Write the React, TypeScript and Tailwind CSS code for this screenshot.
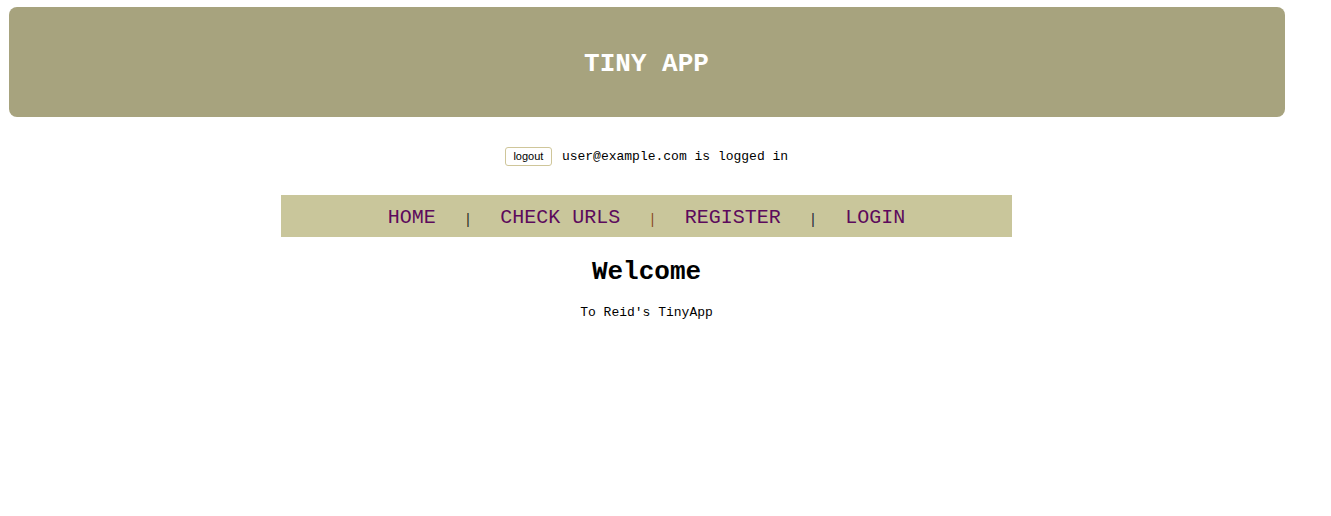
import React from "react";

const mono = { fontFamily: '"Liberation Mono", "Courier New", monospace' };

export default function App() {
  const links = ["HOME", "CHECK URLS", "REGISTER", "LOGIN"];
  const sepColors = ["text-[#2a2a1e]", "text-[#8a4a22]", "text-[#22183a]"];
  return (
    <div className="w-[1331px] min-h-[516px] bg-white" style={mono}>
      <div className="w-[1293px] flex flex-col items-center pt-[7px]">
        <header className="ml-[9px] mr-[8px] w-[1276px] h-[110px] rounded-[8px] bg-[#a7a37e] flex items-center justify-center">
          <h1 className="text-white font-bold text-[26px] leading-none mt-[4px] mr-[1px]">TINY APP</h1>
        </header>

        <div className="mt-[29px] flex items-center h-[20px]">
          <button
            className="w-[47px] h-[19px] rounded-[3px] border border-[#cfc69a] bg-white text-[11px] leading-none text-black flex items-center justify-center"
            style={{ fontFamily: '"Liberation Sans", Arial, sans-serif' }}
          >
            logout
          </button>
          <span className="ml-[10px] mt-[1px] text-[13px] text-black">user@example.com is logged in</span>
        </div>

        <nav className="mt-[29px] w-[731px] h-[42px] bg-[#c9c69b] flex items-center justify-center gap-[28px] pt-[3px]">
          {links.map((l, i) => (
            <React.Fragment key={l}>
              <a className="text-[20px] leading-none text-[#5c0a5c] cursor-pointer">{l}</a>
              {i < links.length - 1 && (
                <span className={`text-[14px] leading-none mt-[5px] ${sepColors[i]}`}>|</span>
              )}
            </React.Fragment>
          ))}
        </nav>

        <h2 className="mt-[22px] text-[26px] font-bold leading-none text-black">Welcome</h2>
        <p className="mt-[21px] text-[13px] leading-none text-black">To Reid's TinyApp</p>
      </div>
    </div>
  );
}
